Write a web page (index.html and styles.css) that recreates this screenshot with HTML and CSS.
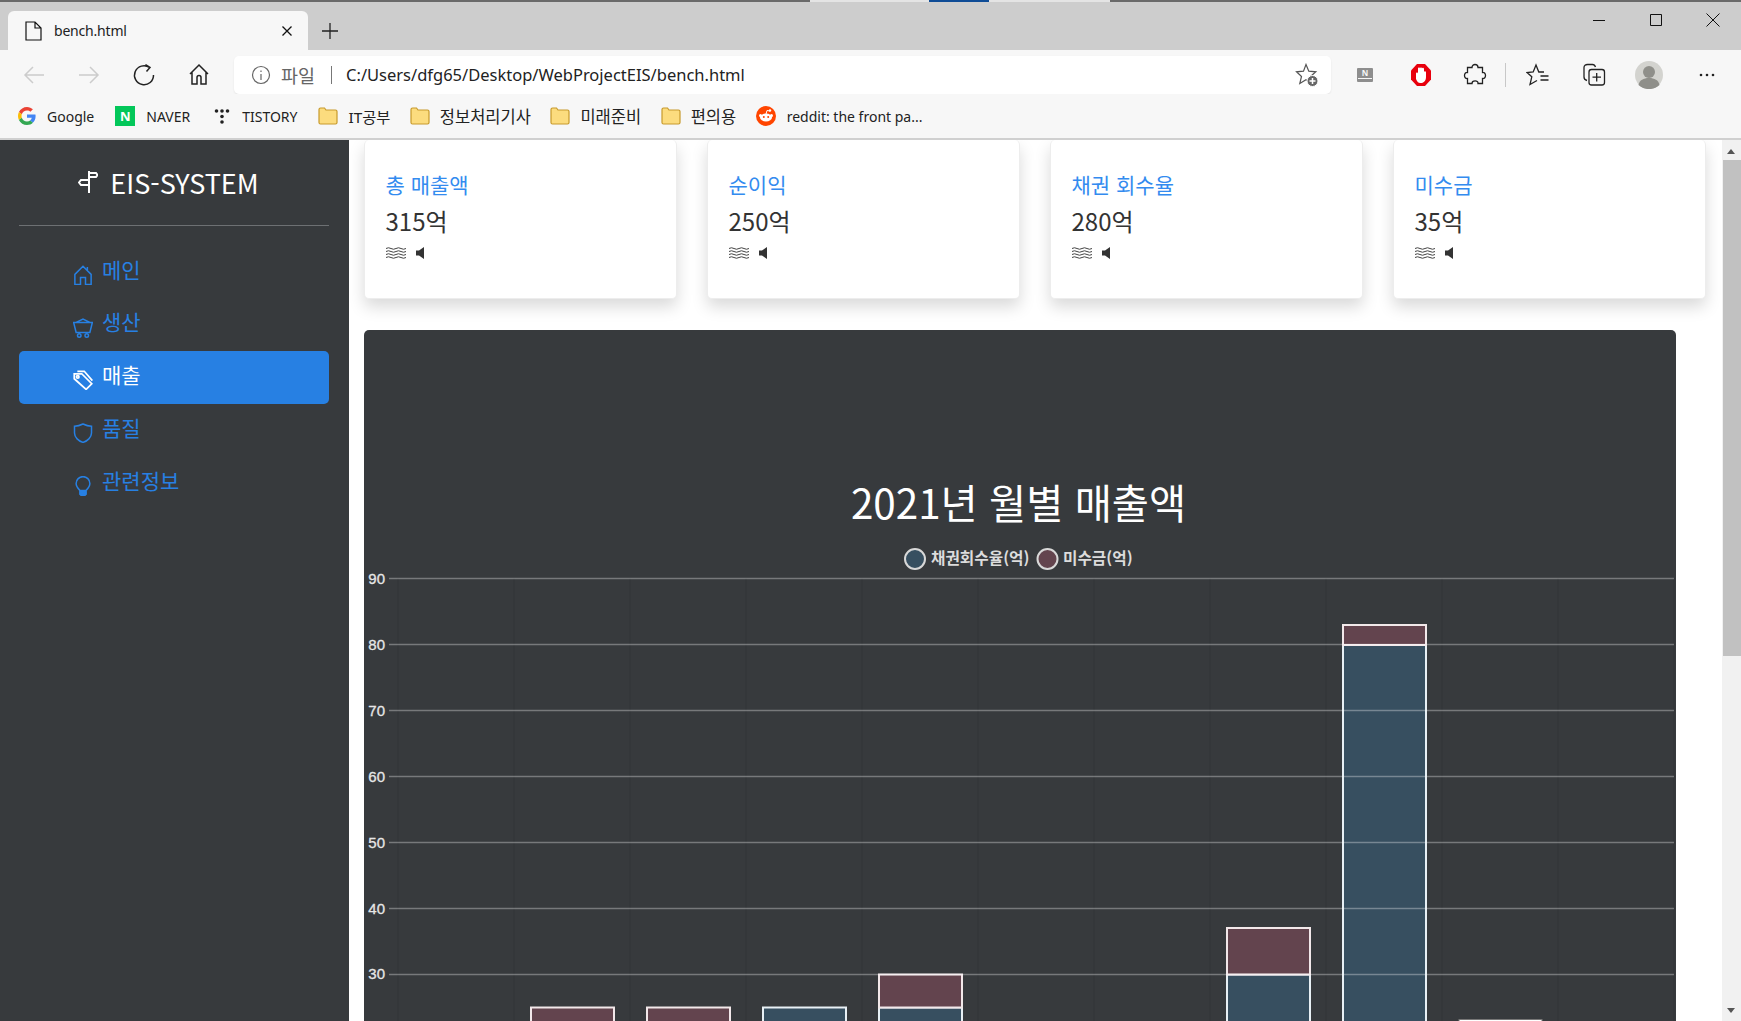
FILE: index.html
```html
<!DOCTYPE html>
<html lang="ko">
<head>
	<meta charset="UTF-8">
	<title>bench.html</title>
	<link rel="stylesheet" href="styles.css">
</head>
<body>
	<div class="topline">
		<span class="seg seg-dark"></span><span class="seg seg-light"></span><span class="seg seg-blue"></span><span class="seg seg-light2"></span><span class="seg seg-rest"></span>
	</div>

	<!-- tabs -->
	<div class="tabbar">
		<div class="tab">
			<svg class="ico" viewBox="0 0 20 20"><path d="M3 1h9l6 6v12H3zM12 1v6h6"/></svg>
			<span class="tab-title">bench.html</span>
			<svg class="tab-close" viewBox="0 0 12 12"><path d="M1.500 1.500l9 9M10.500 1.500l-9 9"/></svg>
		</div>
		<svg class="tab-new" viewBox="0 0 18 18"><path d="M9 1v16M1 9h16"/></svg>
		<div class="winbtns">
			<svg viewBox="0 0 14 14"><path d="M1 7.500h12"/></svg>
			<svg viewBox="0 0 14 14"><path d="M1.500 1.500h11v11h-11z"/></svg>
			<svg viewBox="0 0 14 14"><path d="M.5.5l13 13M13.500.5l-13 13"/></svg>
		</div>
	</div>

	<!-- address row -->
	<div class="toolbar">
		<div class="navbtns">
			<svg class="nav-off" viewBox="0 0 24 24"><path d="M22 12H3M11 4l-8 8 8 8"/></svg>
			<svg class="nav-off" viewBox="0 0 24 24"><path d="M2 12h19M13 4l8 8-8 8"/></svg>
			<svg viewBox="0 0 24 24"><path d="M17.500 4.500a9.500 9.500 0 1 0 4 7.500M13.500 1.500l4.500 3-3.500 4"/></svg>
			<svg viewBox="0 0 24 24"><path d="M3 11l9-9 9 9M5 9.500v11.500h5v-6.500a2 2 0 0 1 4 0v6.500h5V9.500"/></svg>
		</div>
		<div class="addr">
			<svg class="addr-info" viewBox="0 0 20 20"><circle cx="10" cy="10" r="8.500"/><path d="M10 9v6M10 5.500v1.500"/></svg>
			<span class="addr-scheme">파일</span>
			<span class="addr-sep"></span>
			<span class="addr-url">C:/Users/dfg65/Desktop/WebProjectEIS/bench.html</span>
			<svg class="addr-star" viewBox="0 0 24 24"><path d="M11 1.500l2.800 6.700 7 .6-5.300 4.700 1.700 7-6.200-3.700-6.200 3.700 1.700-7L1.500 8.800l7-.6z"/><circle class="star-dot" cx="17.500" cy="18" r="5.500"/><path class="star-plus" d="M17.500 15v6M14.500 18h6"/></svg>
		</div>
		<div class="tools">
			<svg class="tool-read" viewBox="0 0 20 20"><rect x="2" y="3" width="16" height="14" rx="1"/><path class="read-line" d="M3 13.500h14"/><text x="10" y="10.500">N</text></svg>
			<svg class="tool-stop" viewBox="0 0 24 24"><path class="stop-oct" d="M8 1h8l6 6.500v9L16 23H8l-6-6.500v-9z"/><path class="stop-hand" d="M7 10.500c0-1.500 2-1.500 2 0V5.500c0-1.500 2-1.500 2 0 0-1.500 2-1.500 2 0 0-1 2-1 2 .5V9c0-1.200 2-1 2 .5v4.500c0 3.500-2 6-5 6s-3.500-1-5-4z"/></svg>
			<svg class="tool-puzzle" viewBox="0 0 24 24"><path d="M9 4.500c0-4 6-4 6 0h4.500v5c4-.5 4 6.500 0 6v5H15c.5-3.500-6-3.500-6 0H4.500v-5c-4 .5-4-6.500 0-6v-5z"/></svg>
			<span class="tool-sep"></span>
			<svg viewBox="0 0 24 24"><path d="M18 9h-5.200L10 2 7.200 9 1 9.500l4.800 4.300L4 21.500l7-4M14.500 13h8M14.500 17h8"/></svg>
			<svg class="tool-coll" viewBox="0 0 24 24"><path d="M5 17.500c-2-.5-3-1.500-3-3.500V4.500c0-2 1.500-3 3.500-3h5c1.500 0 2.500 1 3 2.500"/><rect x="7" y="6.500" width="15.500" height="15.500" rx="2.500"/><path d="M14.700 10v8.500M10.500 14.200h8.500"/></svg>
			<svg class="tool-avatar" viewBox="0 0 28 28"><circle class="av-bg" cx="14" cy="14" r="14"/><circle class="av-fg" cx="14" cy="11" r="6"/><path class="av-fg" d="M3.500 24c1-5 5-7 10.500-7s9.500 2 10.500 7c-6 5.500-15 5.500-21 0z"/></svg>
			<svg class="tool-more" viewBox="0 0 18 4"><circle cx="3" cy="2" r="1.300"/><circle cx="9" cy="2" r="1.300"/><circle cx="15" cy="2" r="1.300"/></svg>
		</div>
	</div>

	<!-- bookmarks -->
	<div class="bookmarks">
		<a class="bm bm-google">
			<svg viewBox="0 0 18 18"><path fill="#ea4335" d="M9 3.500c1.500 0 2.600.5 3.400 1.300l2.500-2.500C13.400 1 11.400 0 9 0 5.500 0 2.400 2 .9 5l2.900 2.300C4.500 5 6.600 3.500 9 3.500z"/><path fill="#4285f4" d="M17.600 9.200c0-.6 0-1.200-.2-1.800H9v3.400h4.800c-.2 1.100-.8 2-1.800 2.700l2.800 2.200c1.700-1.500 2.800-3.800 2.800-6.500z"/><path fill="#fbbc05" d="M3.800 10.700C3.600 10.200 3.500 9.600 3.500 9s.1-1.200.3-1.700L.9 5C.3 6.200 0 7.600 0 9s.3 2.800.9 4z"/><path fill="#34a853" d="M9 18c2.400 0 4.500-.8 5.900-2.200l-2.800-2.200c-.8.500-1.800.9-3.100.9-2.400 0-4.500-1.600-5.200-3.800L.9 13C2.400 16 5.500 18 9 18z"/></svg>
			<span>Google</span>
		</a>
		<a class="bm bm-naver">
			<span class="naver-mark">N</span>
			<span>NAVER</span>
		</a>
		<a class="bm bm-tistory">
			<svg viewBox="0 0 16 16"><circle cx="2.500" cy="3" r="1.800"/><circle cx="8" cy="3" r="1.800"/><circle cx="13.500" cy="3" r="1.800"/><circle cx="8" cy="8.500" r="1.800"/><circle cx="8" cy="14" r="1.800"/></svg>
			<span>TISTORY</span>
		</a>
		<a class="bm bm-folder bm-it">
			<svg class="folder" viewBox="0 0 20 20"><path d="M1 5V3.500C1 2.500 1.500 2 2.500 2h4L8 4h9.500c1 0 1.500.5 1.500 1.500v11c0 1-.5 1.500-1.500 1.500h-15C1.500 18 1 17.500 1 16.500z"/></svg>
			<span>IT공부</span>
		</a>
		<a class="bm bm-folder">
			<svg class="folder" viewBox="0 0 20 20"><path d="M1 5V3.500C1 2.500 1.500 2 2.500 2h4L8 4h9.500c1 0 1.500.5 1.500 1.500v11c0 1-.5 1.500-1.500 1.500h-15C1.500 18 1 17.500 1 16.500z"/></svg>
			<span>정보처리기사</span>
		</a>
		<a class="bm bm-folder">
			<svg class="folder" viewBox="0 0 20 20"><path d="M1 5V3.500C1 2.500 1.500 2 2.500 2h4L8 4h9.500c1 0 1.500.5 1.500 1.500v11c0 1-.5 1.500-1.500 1.500h-15C1.500 18 1 17.500 1 16.500z"/></svg>
			<span>미래준비</span>
		</a>
		<a class="bm bm-folder">
			<svg class="folder" viewBox="0 0 20 20"><path d="M1 5V3.500C1 2.500 1.500 2 2.500 2h4L8 4h9.500c1 0 1.500.5 1.500 1.500v11c0 1-.5 1.500-1.500 1.500h-15C1.500 18 1 17.500 1 16.500z"/></svg>
			<span>편의용</span>
		</a>
		<a class="bm bm-reddit">
			<svg viewBox="0 0 20 20"><circle cx="10" cy="10" r="10" fill="#ff4500"/><ellipse cx="10" cy="11.500" rx="6" ry="4" fill="#fff"/><circle cx="4.500" cy="9.500" r="1.500" fill="#fff"/><circle cx="15.500" cy="9.500" r="1.500" fill="#fff"/><circle cx="14" cy="4.500" r="1.200" fill="#fff"/><path d="M10 8l1-3.500 3 .5" fill="none" stroke="#fff"/><circle cx="7.800" cy="11" r="1" fill="#ff4500"/><circle cx="12.200" cy="11" r="1" fill="#ff4500"/></svg>
			<span>reddit: the front pa...</span>
		</a>
	</div>

	<div class="page">
		<!-- left menu -->
		<aside class="sidebar">
			<div class="brand">
				<svg class="brand-ico" viewBox="0 0 20 24"><path d="M11 1v22M11 3h7l1.500 2-1.500 2h-7M11 10H3l-2 2.500L3 15h8"/></svg>
				<span>EIS-SYSTEM</span>
			</div>
			<hr class="side-line">
			<ul class="menu">
				<li>
					<svg viewBox="0 0 16 16"><path d="M1.500 15.500V7.500L8 1l6.500 6.500v8h-4.500V10H6v5.500zM11.500 1.500v3"/></svg>
					<span>메인</span>
				</li>
				<li>
					<svg viewBox="0 0 16 16"><path d="M.5 3.500h15L13.500 11.500h-11zM2.500 3.500L8 .8l5.500 2.700"/><circle cx="5" cy="14" r="1.400"/><circle cx="11" cy="14" r="1.400"/></svg>
					<span>생산</span>
				</li>
				<li class="active">
					<svg class="ico-tag" viewBox="0 0 16 16"><path d="M1 3h6l8 8-4.500 4.500L1 7zM3.500 1H9l6.500 7.500"/><circle cx="3.800" cy="5.500" r="1"/></svg>
					<span>매출</span>
				</li>
				<li>
					<svg viewBox="0 0 16 16"><path d="M8 .8c2 1 4.300 1.700 6.800 1.700V8c0 3.500-3.300 6.500-6.800 7.500C4.500 14.500 1.200 11.500 1.200 8V2.500C3.700 2.500 6 1.800 8 .8z"/></svg>
					<span>품질</span>
				</li>
				<li>
					<svg viewBox="0 0 16 16"><path d="M5.500 11.500C4 10 2.500 8.500 2.500 6a5.500 5.500 0 0 1 11 0c0 2.500-1.500 4-3 5.500z"/><path class="bulb-base" d="M5.500 12.500h5v2l-1 1h-3l-1-1z"/></svg>
					<span>관련정보</span>
				</li>
			</ul>
		</aside>

		<main class="content">
			<div class="cards">
				<div class="card">
					<h5 class="card-title">총 매출액</h5>
					<div class="card-value">315억</div>
					<div class="card-icons">
						<svg class="wave" viewBox="0 0 20 12"><path d="M0 1.500q2.500-1.500 5 0t5 0 5 0 5 0M0 4.500q2.500-1.500 5 0t5 0 5 0 5 0M0 7.500q2.500-1.500 5 0t5 0 5 0 5 0M0 10.500q2.500-1.500 5 0t5 0 5 0 5 0"/></svg>
						<svg class="speaker" viewBox="0 0 8 12"><path d="M0 3.500h3L8 0v12L3 8.500H0z"/></svg>
					</div>
				</div>
				<div class="card">
					<h5 class="card-title">순이익</h5>
					<div class="card-value">250억</div>
					<div class="card-icons">
						<svg class="wave" viewBox="0 0 20 12"><path d="M0 1.500q2.500-1.500 5 0t5 0 5 0 5 0M0 4.500q2.500-1.500 5 0t5 0 5 0 5 0M0 7.500q2.500-1.500 5 0t5 0 5 0 5 0M0 10.500q2.500-1.500 5 0t5 0 5 0 5 0"/></svg>
						<svg class="speaker" viewBox="0 0 8 12"><path d="M0 3.500h3L8 0v12L3 8.500H0z"/></svg>
					</div>
				</div>
				<div class="card">
					<h5 class="card-title">채권 회수율</h5>
					<div class="card-value">280억</div>
					<div class="card-icons">
						<svg class="wave" viewBox="0 0 20 12"><path d="M0 1.500q2.500-1.500 5 0t5 0 5 0 5 0M0 4.500q2.500-1.500 5 0t5 0 5 0 5 0M0 7.500q2.500-1.500 5 0t5 0 5 0 5 0M0 10.500q2.500-1.500 5 0t5 0 5 0 5 0"/></svg>
						<svg class="speaker" viewBox="0 0 8 12"><path d="M0 3.500h3L8 0v12L3 8.500H0z"/></svg>
					</div>
				</div>
				<div class="card">
					<h5 class="card-title">미수금</h5>
					<div class="card-value">35억</div>
					<div class="card-icons">
						<svg class="wave" viewBox="0 0 20 12"><path d="M0 1.500q2.500-1.500 5 0t5 0 5 0 5 0M0 4.500q2.500-1.500 5 0t5 0 5 0 5 0M0 7.500q2.500-1.500 5 0t5 0 5 0 5 0M0 10.500q2.500-1.500 5 0t5 0 5 0 5 0"/></svg>
						<svg class="speaker" viewBox="0 0 8 12"><path d="M0 3.500h3L8 0v12L3 8.500H0z"/></svg>
					</div>
				</div>
			</div>

			<!-- chart: coordinates in the viewBox are the picture's own -->
			<section class="chart-box">
				<svg class="chart" viewBox="364 330 1312 760">
					<text class="chart-title" x="1018.500" y="519">2021년 월별 매출액</text>

					<circle class="leg leg-blue" cx="915" cy="559" r="10"/>
					<text class="leg-text" x="931" y="564">채권회수율(억)</text>
					<circle class="leg leg-red" cx="1047.500" cy="559" r="10"/>
					<text class="leg-text" x="1063" y="564">미수금(억)</text>

					<g class="vgrid">
						<path d="M398 578v512M514 578v512M630 578v512M746 578v512M862 578v512M978 578v512M1094 578v512M1210 578v512M1326 578v512M1442 578v512M1558 578v512M1674 578v512"/>
					</g>

					<g class="bars">
						<rect class="bar-red" x="531" y="1007.500" width="83" height="80"/>
						<rect class="bar-red" x="647" y="1007.500" width="83" height="80"/>
						<rect class="bar-blue" x="763" y="1007.500" width="83" height="80"/>
						<rect class="bar-blue" x="879" y="1007.500" width="83" height="80"/>
						<rect class="bar-red" x="879" y="974.500" width="83" height="33"/>
						<rect class="bar-blue" x="1227" y="974.500" width="83" height="120"/>
						<rect class="bar-red" x="1227" y="928" width="83" height="46.500"/>
						<rect class="bar-blue" x="1343" y="645" width="83" height="450"/>
						<rect class="bar-red" x="1343" y="625" width="83" height="20"/>
						<rect class="bar-white" x="1459" y="1019.500" width="83" height="20"/>
					</g>

					<g class="hgrid">
						<path d="M389 578.500H1674M389 644.500H1674M389 710.500H1674M389 776.500H1674M389 842.500H1674M389 908.500H1674M389 974.500H1674"/>
					</g>

					<g class="ylabels">
						<text x="385" y="584">90</text>
						<text x="385" y="650">80</text>
						<text x="385" y="716">70</text>
						<text x="385" y="782">60</text>
						<text x="385" y="848">50</text>
						<text x="385" y="914">40</text>
						<text x="385" y="979">30</text>
					</g>
				</svg>
			</section>
		</main>

		<div class="scrollbar">
			<span class="arrow-up"></span>
			<div class="thumb"></div>
			<span class="arrow-down"></span>
		</div>
	</div>
</body>
</html>
```

FILE: styles.css
```css
*{box-sizing:border-box;}
html,body{height:100%;}
body{margin:0;overflow:hidden;display:flex;flex-direction:column;background:#fff;color:#333;font-family:"Noto Sans","Noto Sans CJK KR",sans-serif;}
h5{margin:0;font-weight:400;}
ul{list-style:none;margin:0;padding:0;}
svg{display:block;flex:none;}

/* browser chrome */
.topline{display:flex;height:2px;flex:none;background:#cdcdcd;}
.seg{display:block;height:100%;}
.seg-dark{width:810px;background:#6a6a6a;}
.seg-light{width:119px;background:#e4e4e4;}
.seg-blue{width:60px;background:#0f4c96;}
.seg-light2{width:121px;background:#e4e4e4;}
.seg-rest{flex:1;background:#6a6a6a;}

.tabbar{display:flex;align-items:flex-end;height:48px;flex:none;padding-left:8px;background:#cdcdcd;}
.tab{display:flex;align-items:center;width:300px;height:39px;padding:0 15px 0 15px;border-radius:6px 6px 0 0;background:#f7f7f7;}
.ico{width:20px;height:20px;fill:none;stroke:#111;stroke-width:1.2;}
.tab-title{margin-left:11px;flex:1;font-size:14px;letter-spacing:-.2px;color:#222;}
.tab-close{width:12px;height:12px;fill:none;stroke:#111;stroke-width:1.300;}
.tab-new{width:18px;height:18px;margin:0 0 10px 13px;fill:none;stroke:#222;stroke-width:1.300;}
.winbtns{display:flex;gap:43px;margin-left:auto;padding:0 21px 23px 0;}
.winbtns svg{width:14px;height:14px;fill:none;stroke:#111;stroke-width:1;}

.toolbar{display:flex;align-items:center;height:44px;flex:none;padding-top:6px;background:#f7f7f7;}
.navbtns{display:flex;gap:31px;width:234px;padding-left:22px;}
.navbtns svg{width:24px;height:24px;fill:none;stroke:#222;stroke-width:1.500;}
.navbtns .nav-off{stroke:#ccc;}
.addr{display:flex;align-items:center;width:1097px;height:38px;padding:0 12px 0 17px;border-radius:5px;background:#fff;box-shadow:0 1px 2px rgba(0,0,0,.08);}
.addr-info{width:20px;height:20px;fill:none;stroke:#666;stroke-width:1.200;}
.addr-scheme{margin-left:10px;font-size:18.500px;color:#666;}
.addr-sep{width:1px;height:18px;margin:0 14px 0 16px;background:#777;}
.addr-url{flex:1;padding-bottom:2px;font-size:16.500px;color:#222;}
.addr-star{width:24px;height:24px;fill:none;stroke:#555;stroke-width:1.200;}
.addr-star .star-dot{fill:#666;stroke:#fff;stroke-width:1;}
.addr-star .star-plus{stroke:#fff;stroke-width:1.500;}
.tools{display:flex;align-items:center;flex:1;padding-left:24px;}
.tools svg{width:24px;height:24px;fill:none;stroke:#222;stroke-width:1.300;margin-right:32px;}
.tools .tool-read{width:20px;height:20px;margin-right:34px;fill:#8e8e8e;stroke:none;}
.tool-read text{font-size:8px;font-weight:700;fill:#f7f7f7;text-anchor:middle;}
.tool-read .read-line{stroke:#f7f7f7;stroke-width:1;}
.stop-oct{fill:#e8000d;stroke:none;}
.stop-hand{fill:#fff;stroke:none;}
.tools .tool-stop{margin-right:30px;stroke:none;}
.tools .tool-puzzle{margin-right:18px;}
.tool-sep{width:1px;height:24px;margin-right:20px;background:#c8c8c8;}
.tools .tool-coll{margin-right:29px;}
.tools .tool-avatar{width:28px;height:28px;margin-right:35px;stroke:none;}
.av-bg{fill:#d3d3cf;}
.av-fg{fill:#8f8f8a;}
.tools .tool-more{width:18px;height:4px;margin:0;fill:#222;stroke:none;}

.bookmarks{display:flex;align-items:center;height:46px;flex:none;padding:0 0 0 18px;border-bottom:2px solid #d0d0d0;background:#f7f7f7;font-size:14px;color:#222;}
.bm{display:flex;align-items:center;margin-right:21px;white-space:nowrap;}
.bm svg{width:18px;height:18px;margin-right:11px;}
.bm-naver{margin-right:24px;}
.bm-tistory svg{width:16px;height:16px;margin-right:12px;fill:#222;}
.bm-folder{margin-right:19.500px;}
.bm-folder svg{width:20px;height:20px;margin-right:10px;}
.bm-folder span{font-size:16.500px;}
.bm-it span{font-size:15.300px;}
.folder{fill:#fcdc7e;stroke:#c79a2c;stroke-width:1.200;}
.bm-reddit svg{width:20px;height:20px;}
.naver-mark{display:flex;align-items:center;justify-content:center;width:20px;height:20px;margin-right:11px;background:#03c75a;color:#fff;font-size:13px;font-weight:700;}

/* page */
.page{display:flex;flex:1;min-height:0;font-family:"Noto Sans CJK KR","Noto Sans",sans-serif;}
.sidebar{width:349px;flex:none;padding:0 20px 0 19px;background:#373a3d;}
.brand{display:flex;align-items:center;justify-content:center;gap:12px;height:84px;padding-right:11px;font-size:27px;color:#fff;}
.brand-ico{width:20px;height:24px;fill:none;stroke:#fff;stroke-width:2;}
.side-line{margin:1px 0 20px;border:0;border-top:1px solid #6d7073;}
.menu li{display:flex;align-items:center;height:52.700px;padding:0 0 0 54px;border-radius:5px;font-size:21px;color:#2780e3;}
.menu li svg{width:20px;height:20px;margin:5px 9px 0 0;fill:none;stroke:#2780e3;stroke-width:1.200;}
.menu li .bulb-base{fill:#2780e3;}
.menu li span{padding-bottom:6px;line-height:1.200;}
.menu li.active{background:#2780e3;color:#fff;}
.menu li.active svg{stroke:#fff;}
.menu li .ico-tag{stroke-width:1.400;}

.content{flex:1;min-width:0;padding-left:15px;overflow:hidden;}
.cards{display:flex;gap:30px;}
.card{width:313px;height:159px;padding:29px 20.500px 0;border-radius:5px;border:1px solid #ededed;border-top:0;background:#fff;box-shadow:0 8px 16px rgba(0,0,0,.15);}
.card-title{font-size:21px;line-height:30px;color:#338bef;}
.card-value{margin-top:4px;font-size:24px;line-height:36px;color:#333;}
.card-icons{display:flex;align-items:center;gap:10px;margin-top:8px;}
.wave{width:20px;height:12px;fill:none;stroke:#444;stroke-width:1;}
.speaker{width:8px;height:12px;fill:#333;}

.chart-box{width:1312px;height:800px;margin-top:31px;border-radius:5px 5px 0 0;background:#373a3d;}
.chart{width:1312px;height:760px;}
.chart-title{font-size:40.400px;fill:#fff;text-anchor:middle;}
.leg{stroke:#d8d8d8;stroke-width:2;}
.leg-blue{fill:#374f60;}
.leg-red{fill:#63444e;}
.leg-text{font-size:15.700px;font-weight:700;fill:#dcdcdc;}
.vgrid path{fill:none;stroke:#323539;stroke-width:1;}
.hgrid path{fill:none;stroke:rgba(255,255,255,.32);stroke-width:1.500;}
.bars rect{stroke-width:2;}
.bar-blue{fill:#374f60;stroke:#e8f0f5;}
.bar-red{fill:#63444e;stroke:#f2e8ea;}
.bars .bar-white{fill:#fff;stroke:#777;stroke-width:1;}
.ylabels text{font-family:"Liberation Sans",sans-serif;font-size:15px;fill:#e6e6e6;stroke:#e6e6e6;stroke-width:.3;text-anchor:end;}

.scrollbar{position:relative;width:19px;flex:none;background:#f1f1f1;}
.thumb{position:absolute;top:20px;left:1px;right:0;height:496px;background:#c1c1c1;}
.arrow-up,.arrow-down{position:absolute;left:5px;width:0;height:0;border-left:4.500px solid transparent;border-right:4.500px solid transparent;}
.arrow-up{top:9px;border-bottom:5px solid #555;}
.arrow-down{bottom:8px;border-top:5px solid #555;}
```
